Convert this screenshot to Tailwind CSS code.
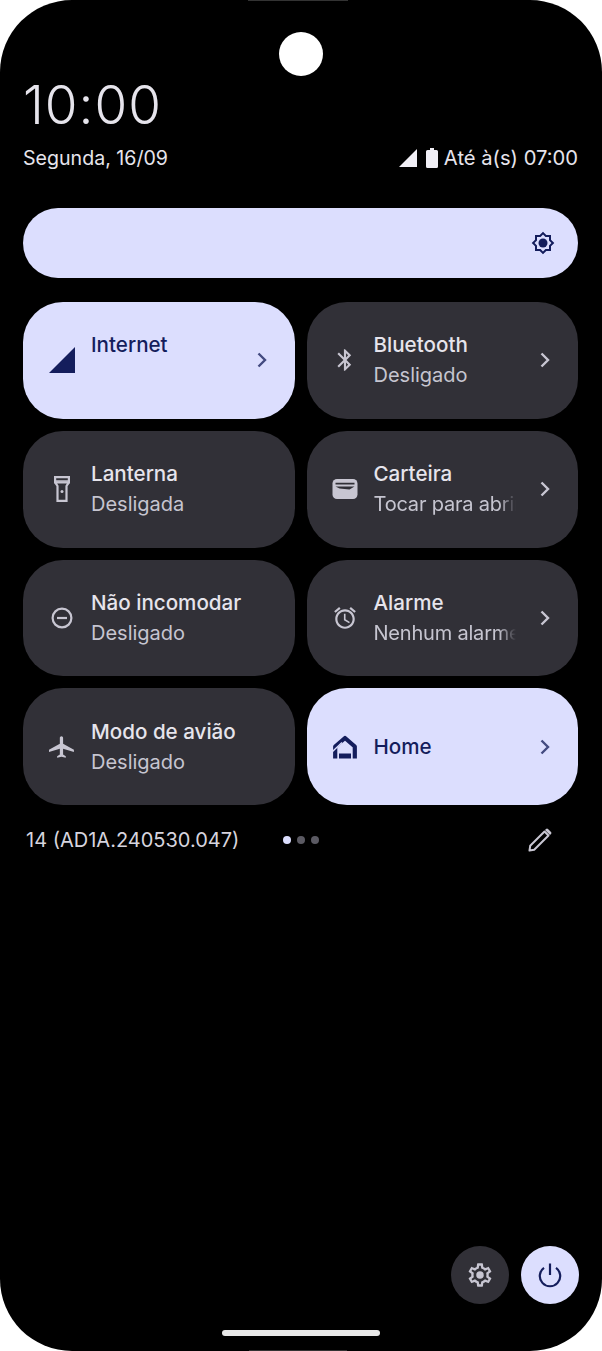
<!DOCTYPE html>
<html lang="pt">
<head>
    <meta charset="UTF-8">
    <title>Configurações rápidas</title>
    <script src="https://cdn.jsdelivr.net/npm/@tailwindcss/browser@4"></script>
</head>
<body class="bg-white font-['Inter',sans-serif]">
    <div class="relative w-[602px] h-[1351px] bg-black rounded-[72px] overflow-hidden flex flex-col pl-[23px] pr-[24px]">
        <!-- Hardware edges and camera -->
        <div class="absolute top-0 left-[248px] w-[100px] h-[1px] bg-[#333333]"></div>
        <div class="absolute bottom-0 left-[249px] w-[98px] h-[1px] bg-[#333333]"></div>
        <div class="absolute top-[32px] left-[279px] w-[44px] h-[44px] rounded-full bg-white"></div>

        <!-- Header -->
        <div class="mt-[74px] text-[53px] leading-[62px] font-light text-[#e6e4ec] tracking-[1px]">10:00</div>
        <div class="mt-[6px] flex items-center justify-between text-[19.6px] leading-[32px] text-[#e6e4ec]">
            <span>Segunda, 16/09</span>
            <div class="flex items-center">
                <svg class="w-[20px] h-[20px] mr-[8px]" viewBox="0 0 20 20" fill="#f1eff6"><path d="M1 19h18V1z"/></svg>
                <svg class="w-[12px] h-[20px] mr-[6px]" viewBox="0 0 12 20" fill="#f1eff6"><path d="M4 0h4v2h2.500q1.500 0 1.500 1.500v15q0 1.500-1.500 1.500h-9Q0 20 0 18.500v-15Q0 2 1.500 2H4z"/></svg>
                <span class="text-[20.2px]">Até à(s) 07:00</span>
            </div>
        </div>

        <!-- Brightness slider -->
        <div class="mt-[34px] h-[70px] rounded-[35px] bg-[#dcdefe] flex items-center justify-end pr-[23px]">
            <svg class="w-[24px] h-[24px]" viewBox="0 0 24 24" fill="#141d5c"><path d="M20 8.690V4h-4.690L12 .69 8.690 4H4v4.690L.69 12 4 15.310V20h4.690L12 23.310 15.310 20H20v-4.690L23.310 12 20 8.690zm-2 5.790V18h-3.520L12 20.480 9.520 18H6v-3.520L3.520 12 6 9.520V6h3.520L12 3.520 14.480 6H18v3.520L20.480 12 18 14.480z"/><circle cx="12" cy="12" r="4.500"/></svg>
        </div>

        <!-- Tiles -->
        <div class="mt-[24px] grid grid-cols-2 gap-x-[12px] gap-y-[12px] auto-rows-[116.8px]">
            <!-- Internet -->
            <div class="rounded-[40px] bg-[#dcdefe] flex items-center pl-[26px] pr-[23px]">
                <svg class="w-[26px] h-[26px] shrink-0" viewBox="0 0 26 26" fill="#141d5c"><path d="M0 26h26V0z"/></svg>
                <div class="ml-[16px] flex-1 min-w-0 mr-[19px] text-[20px] leading-[31px]">
                    <div class="text-[20.6px] font-medium whitespace-nowrap text-[#141d5c]">Internet</div>
                    <div class="h-[31px]"></div>
                </div>
                <svg class="w-[20px] h-[20px] shrink-0" viewBox="0 0 20 20" fill="none" stroke="#434a80" stroke-width="2.400"><path d="M6.500 3.500L13 10l-6.500 6.500"/></svg>
            </div>
            <!-- Bluetooth -->
            <div class="rounded-[40px] bg-[#313037] flex items-center pl-[25px] pr-[23px]">
                <svg class="w-[26px] h-[26px] shrink-0" viewBox="0 0 24 24" fill="#c8c6d2"><path d="M17.710 7.710L12 2h-1v7.590L6.410 5 5 6.410 10.590 12 5 17.590 6.410 19 11 14.410V22h1l5.710-5.710-4.300-4.290 4.300-4.290zM13 5.830l1.880 1.880L13 9.590V5.830zm1.880 10.460L13 18.170v-3.760l1.880 1.880z"/></svg>
                <div class="ml-[16px] flex-1 min-w-0 mr-[19px] text-[20px] leading-[31px]">
                    <div class="text-[20.6px] font-medium whitespace-nowrap text-[#e6e4ec]">Bluetooth</div>
                    <div class="text-[#c6c5d0] whitespace-nowrap overflow-hidden">Desligado</div>
                </div>
                <svg class="w-[20px] h-[20px] shrink-0" viewBox="0 0 20 20" fill="none" stroke="#c8c6d2" stroke-width="2.400"><path d="M6.500 3.500L13 10l-6.500 6.500"/></svg>
            </div>
            <!-- Lanterna -->
            <div class="rounded-[40px] bg-[#313037] flex items-center pl-[26px] pr-[23px]">
                <svg class="w-[26px] h-[26px] shrink-0" viewBox="0 0 26 26" fill="none" stroke="#c8c6d2" stroke-width="2.200"><path d="M6.100 1.100h13.800v5.200H6.100zM6.100 6.300l2.400 3.700v14.900h9V10l2.400-3.700"/><path d="M7 5h12" stroke-width="1.500"/><circle cx="13" cy="15.500" r="1.500" fill="#c8c6d2" stroke="none"/></svg>
                <div class="ml-[16px] flex-1 min-w-0 mr-[19px] text-[20px] leading-[31px]">
                    <div class="text-[20.6px] font-medium whitespace-nowrap text-[#e6e4ec]">Lanterna</div>
                    <div class="text-[#c6c5d0] whitespace-nowrap overflow-hidden">Desligada</div>
                </div>
                <div class="w-[20px] shrink-0"></div>
            </div>
            <!-- Carteira -->
            <div class="rounded-[40px] bg-[#313037] flex items-center pl-[25px] pr-[23px]">
                <svg class="w-[26px] h-[26px] shrink-0" viewBox="0 0 26 26"><rect x="0.500" y="3" width="25" height="20" rx="4.500" fill="#c8c6d2"/><path d="M3.500 6.800h19v1.600h-19zM3.500 10.500h19l-5 3-10-1z" fill="#313037"/></svg>
                <div class="ml-[16px] flex-1 min-w-0 mr-[19px] text-[20px] leading-[31px]">
                    <div class="text-[20.6px] font-medium whitespace-nowrap text-[#e6e4ec]">Carteira</div>
                    <div class="text-[#c6c5d0] tracking-[-0.2px] whitespace-nowrap overflow-hidden [mask-image:linear-gradient(to_right,black_88%,transparent)]">Tocar para abrir</div>
                </div>
                <svg class="w-[20px] h-[20px] shrink-0" viewBox="0 0 20 20" fill="none" stroke="#c8c6d2" stroke-width="2.400"><path d="M6.500 3.500L13 10l-6.500 6.500"/></svg>
            </div>
            <!-- Não incomodar -->
            <div class="rounded-[40px] bg-[#313037] flex items-center pl-[26px] pr-[23px]">
                <svg class="w-[26px] h-[26px] shrink-0" viewBox="0 0 26 26" fill="none" stroke="#c8c6d2" stroke-width="2.200"><circle cx="13" cy="13" r="9.400"/><path d="M8 13h10"/></svg>
                <div class="ml-[16px] flex-1 min-w-0 mr-[19px] text-[20px] leading-[31px]">
                    <div class="text-[20.6px] font-medium whitespace-nowrap text-[#e6e4ec]">Não incomodar</div>
                    <div class="text-[#c6c5d0] whitespace-nowrap overflow-hidden">Desligado</div>
                </div>
                <div class="w-[20px] shrink-0"></div>
            </div>
            <!-- Alarme -->
            <div class="rounded-[40px] bg-[#313037] flex items-center pl-[25px] pr-[23px]">
                <svg class="w-[26px] h-[26px] shrink-0" viewBox="0 0 24 24" fill="#c8c6d2"><path d="M22 5.720l-4.600-3.860-1.290 1.530 4.600 3.860L22 5.720zM7.880 3.390L6.600 1.860 2 5.710l1.290 1.530 4.590-3.850zM12.500 8H11v6l4.750 2.850.75-1.230-4-2.370V8zM12 4c-4.970 0-9 4.030-9 9s4.030 9 9 9 9-4.030 9-9-4.030-9-9-9zm0 16c-3.870 0-7-3.130-7-7s3.130-7 7-7 7 3.130 7 7-3.130 7-7 7z"/></svg>
                <div class="ml-[16px] flex-1 min-w-0 mr-[19px] text-[20px] leading-[31px]">
                    <div class="text-[20.6px] font-medium whitespace-nowrap text-[#e6e4ec]">Alarme</div>
                    <div class="text-[#c6c5d0] tracking-[-0.2px] whitespace-nowrap overflow-hidden [mask-image:linear-gradient(to_right,black_88%,transparent)]">Nenhum alarme</div>
                </div>
                <svg class="w-[20px] h-[20px] shrink-0" viewBox="0 0 20 20" fill="none" stroke="#c8c6d2" stroke-width="2.400"><path d="M6.500 3.500L13 10l-6.500 6.500"/></svg>
            </div>
            <!-- Modo de avião -->
            <div class="rounded-[40px] bg-[#313037] flex items-center pl-[26px] pr-[23px]">
                <svg class="w-[26px] h-[26px] shrink-0" viewBox="0 0 24 24" fill="#c8c6d2"><path d="M23 16.500v-2l-10-5.500V3.500c0-.83-.67-1.500-1.500-1.500S10 2.670 10 3.500V9L0 14.500v2l10-2.800V19l-2.500 1.500V22l4-1 4 1v-1.500L13 19v-5.300z"/></svg>
                <div class="ml-[16px] flex-1 min-w-0 mr-[19px] text-[20px] leading-[31px]">
                    <div class="text-[20.6px] font-medium whitespace-nowrap text-[#e6e4ec]">Modo de avião</div>
                    <div class="text-[#c6c5d0] whitespace-nowrap overflow-hidden">Desligado</div>
                </div>
                <div class="w-[20px] shrink-0"></div>
            </div>
            <!-- Home -->
            <div class="rounded-[40px] bg-[#dcdefe] flex items-center pl-[25px] pr-[23px]">
                <svg class="w-[26px] h-[26px] shrink-0" viewBox="0 0 26 26"><path d="M3.200 24.500V12.500L13 4l9.800 8.500V24.500" fill="none" stroke="#141d5c" stroke-width="4.200" stroke-linejoin="round"/><path d="M.5 17.500L10 8.500" stroke="#dcdefe" stroke-width="1.400"/><path d="M7 19.500h12v5H7z" fill="#141d5c"/></svg>
                <div class="ml-[16px] flex-1 min-w-0 mr-[19px] text-[20px] leading-[31px]">
                    <div class="text-[20.6px] font-medium whitespace-nowrap text-[#141d5c]">Home</div>
                </div>
                <svg class="w-[20px] h-[20px] shrink-0" viewBox="0 0 20 20" fill="none" stroke="#434a80" stroke-width="2.400"><path d="M6.500 3.500L13 10l-6.500 6.500"/></svg>
            </div>
        </div>

        <!-- Build number, page dots, edit -->
        <div class="mt-[20px] flex items-center h-[30px] pl-[3px]">
            <span class="w-[257px] text-[20px] leading-[30px] whitespace-nowrap text-[#d6d4de]">14 (AD1A.240530.047)</span>
            <div class="flex items-center gap-[6px]">
                <span class="w-[8px] h-[8px] rounded-full bg-[#dcdefe]"></span>
                <span class="w-[8px] h-[8px] rounded-full bg-[#5b5a63]"></span>
                <span class="w-[8px] h-[8px] rounded-full bg-[#5b5a63]"></span>
            </div>
            <svg class="ml-[208px] w-[26px] h-[26px]" viewBox="0 0 26 26" fill="none" stroke="#c8c6d2" stroke-width="2" stroke-linejoin="round"><path d="M2.500 23.500l.7-4.700L17.500 4.500l4 4L7.200 22.800z"/><path d="M18 3l1-1q1-1 2 0l3 3q1 1 0 2l-1 1z" fill="#c8c6d2" stroke="none"/></svg>
        </div>

        <div class="flex-1"></div>

        <!-- Settings and power -->
        <div class="flex justify-end gap-[12px] -mr-[1px]">
            <div class="w-[58px] h-[58px] rounded-full bg-[#313037] flex items-center justify-center">
                <svg class="w-[28px] h-[28px]" viewBox="0 0 24 24" fill="#c8c6d2"><path d="M19.430 12.980c.04-.32.07-.64.07-.98 0-.34-.03-.66-.07-.98l2.110-1.650c.19-.15.24-.42.12-.64l-2-3.460c-.09-.16-.26-.25-.44-.25-.06 0-.12.01-.17.03l-2.490 1c-.52-.4-1.080-.73-1.690-.98l-.38-2.650C14.460 2.180 14.250 2 14 2h-4c-.25 0-.46.18-.49.42l-.38 2.650c-.61.25-1.170.59-1.690.98l-2.490-1c-.06-.02-.12-.03-.18-.03-.17 0-.34.09-.43.25l-2 3.460c-.13.22-.07.49.12.64l2.110 1.650c-.04.32-.07.65-.07.98 0 .33.03.66.07.98l-2.110 1.650c-.19.15-.24.42-.12.64l2 3.460c.09.16.26.25.44.25.06 0 .12-.01.17-.03l2.490-1c.52.4 1.080.73 1.690.98l.38 2.650c.03.24.24.42.49.42h4c.25 0 .46-.18.49-.42l.38-2.650c.61-.25 1.170-.59 1.690-.98l2.490 1c.06.02.12.03.18.03.17 0 .34-.09.43-.25l2-3.460c.12-.22.07-.49-.12-.64l-2.110-1.650zm-1.980-1.710c.04.31.05.52.05.73 0 .21-.02.43-.05.73l-.14 1.130.89.7 1.080.84-.7 1.210-1.270-.51-1.040-.42-.9.68c-.43.32-.84.56-1.250.73l-1.060.43-.16 1.130-.2 1.350h-1.400l-.19-1.350-.16-1.130-1.060-.43c-.43-.18-.83-.41-1.230-.71l-.91-.7-1.060.43-1.270.51-.7-1.210 1.080-.84.89-.7-.14-1.130c-.03-.31-.05-.54-.05-.74s.02-.43.05-.73l.14-1.130-.89-.7-1.080-.84.7-1.210 1.270.51 1.040.42.9-.68c.43-.32.84-.56 1.250-.73l1.060-.43.16-1.130.2-1.350h1.390l.19 1.350.16 1.130 1.060.43c.43.18.83.41 1.230.71l.91.7 1.060-.43 1.270-.51.7 1.210-1.070.85-.89.7.14 1.130z"/><circle cx="12" cy="12" r="3.200"/></svg>
            </div>
            <div class="w-[58px] h-[58px] rounded-full bg-[#dcdefe] flex items-center justify-center">
                <svg class="w-[26px] h-[26px]" viewBox="0 0 26 26" fill="none" stroke="#141d5c" stroke-width="2.200"><path d="M13 1.500v11.500"/><path d="M7 5.800a10.200 10.200 0 1 0 12 0"/></svg>
            </div>
        </div>

        <!-- Gesture bar -->
        <div class="mt-[26px] mb-[15px] mx-auto w-[158px] h-[6px] rounded-full bg-[#e8e8e8]"></div>
    </div>
</body>
</html>
